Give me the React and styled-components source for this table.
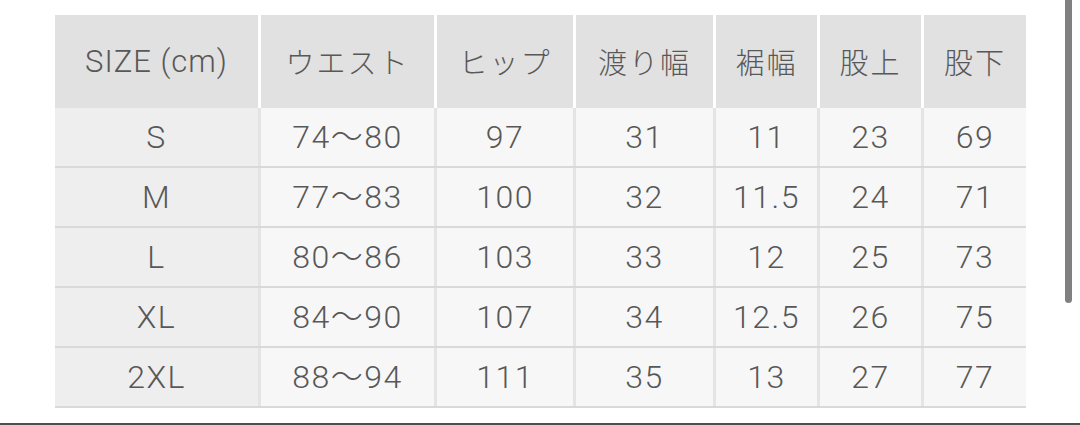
import styled, { createGlobalStyle } from "styled-components";

const GlobalStyle = createGlobalStyle`
  html, body {
    margin: 0;
    padding: 0;
    background: #ffffff;
  }
  body {
    font-family: Roboto, "Noto Sans CJK JP", "Noto Sans", sans-serif;
    color: #585858;
  }
`;

const COLUMNS = "203px 173px 136px 137px 101px 101px 102px";

const Page = styled.div`
  position: relative;
  width: 1080px;
  height: 425px;
  box-sizing: border-box;
  padding: 15px 0 0 55px;
  border-bottom: 2px solid #4e4e4e;
  overflow: hidden;
`;

const Table = styled.div`
  display: flex;
  flex-direction: column;
  width: 971px;
`;

const HeadRow = styled.div`
  display: grid;
  grid-template-columns: ${COLUMNS};
  column-gap: 3px;
  background: #ffffff;
`;

const HeadCell = styled.div`
  height: 93px;
  display: flex;
  align-items: center;
  justify-content: center;
  background: #e1e1e1;
  font-family: ${props =>
    props.$latin ? "Roboto, sans-serif" : '"Noto Sans CJK JP", sans-serif'};
  font-size: ${props => (props.$latin ? "31px" : "29px")};
  font-weight: 300;
  line-height: 1;
  letter-spacing: ${props => (props.$latin ? "1px" : "2px")};
  white-space: nowrap;
`;

const BodyRow = styled.div`
  display: grid;
  grid-template-columns: ${COLUMNS};
  column-gap: 3px;
  background: #e4e4e4;
  border-bottom: 2px solid #d9d9d9;
`;

const Cell = styled.div`
  height: 58px;
  display: flex;
  align-items: center;
  justify-content: center;
  background: ${props => (props.$label ? "#eeeeee" : "#f7f7f7")};
  font-size: 32px;
  font-weight: 300;
  line-height: 1;
  letter-spacing: 1.5px;
  white-space: nowrap;
`;

const Scrollbar = styled.div`
  position: absolute;
  top: -6px;
  left: 1065px;
  width: 7px;
  height: 309px;
  border-radius: 4px;
  background: #808080;
`;

const headers = ["SIZE (cm)", "ウエスト", "ヒップ", "渡り幅", "裾幅", "股上", "股下"];

const rows = [
  ["S", "74〜80", "97", "31", "11", "23", "69"],
  ["M", "77〜83", "100", "32", "11.5", "24", "71"],
  ["L", "80〜86", "103", "33", "12", "25", "73"],
  ["XL", "84〜90", "107", "34", "12.5", "26", "75"],
  ["2XL", "88〜94", "111", "35", "13", "27", "77"]
];

const App = () => {
  return (
    <>
      <GlobalStyle />
      <Page>
        <Table>
          <HeadRow>
            {headers.map((h, i) => (
              <HeadCell key={h} $latin={i === 0}>
                {h}
              </HeadCell>
            ))}
          </HeadRow>
          {rows.map(row => (
            <BodyRow key={row[0]}>
              {row.map((v, i) => (
                <Cell key={i} $label={i === 0}>
                  {v}
                </Cell>
              ))}
            </BodyRow>
          ))}
        </Table>
        <Scrollbar />
      </Page>
    </>
  );
};

export default App;
